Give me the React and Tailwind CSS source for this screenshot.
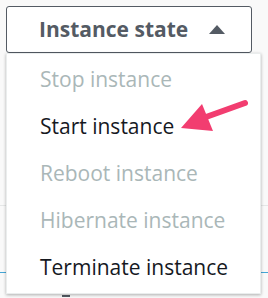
import React from "react";

const items = [
  { label: "Stop instance", disabled: true },
  { label: "Start instance", disabled: false },
  { label: "Reboot instance", disabled: true },
  { label: "Hibernate instance", disabled: true },
  { label: "Terminate instance", disabled: false },
];

export default function App() {
  return (
    <div
      className="relative w-[268px] h-[298px] overflow-hidden bg-[#f9f9f9]"
      style={{ fontFamily: '"Open Sans", "Noto Sans", sans-serif' }}
    >
      {/* background page */}
      <div className="flex flex-col">
        <div className="pt-[6px] pl-[6px]">
          <div className="w-[246px] h-[47px] rounded-[3px] border border-[#545b64] bg-white flex items-center pl-[32px] pr-[26px] justify-between">
            <span className="text-[21px] font-bold text-[#545b64] leading-none">Instance state</span>
            <svg width="16" height="9" viewBox="0 0 16 9">
              <polygon points="8,0 16,9 0,9" fill="#545b64" />
            </svg>
          </div>
        </div>
        <div className="h-[152px]" />
        <div className="h-px bg-[#e5e7e7]" />
        <div className="h-[66px]" />
        <div className="h-px bg-[#44a6d6]" />
        <div className="h-[22px]" />
        <div className="ml-[62px] w-[8px] h-[2px] bg-[#545b64]" />
      </div>

      {/* dropdown menu */}
      <div className="absolute left-[6px] top-[53px] w-[255px] bg-white border border-[#eaeded] shadow-[0_1px_3px_rgba(0,0,0,0.3)] pt-[2px] pb-[2px]">
        {items.map((it) => (
          <div
            key={it.label}
            className={`h-[47px] flex items-center pl-[33px] text-[21px] leading-none ${
              it.disabled ? "text-[#aab7b8]" : "text-[#16191f]"
            }`}
          >
            {it.label}
          </div>
        ))}
      </div>

      {/* pink arrow annotation */}
      <svg
        className="absolute left-[178px] top-[97px]"
        width="72"
        height="42"
        viewBox="0 0 72 42"
      >
        <path d="M67 6 L28 20" stroke="#f23d70" strokeWidth="6" strokeLinecap="round" fill="none" />
        <polygon points="3,31 24,7 35,34" fill="#f23d70" />
      </svg>
    </div>
  );
}
